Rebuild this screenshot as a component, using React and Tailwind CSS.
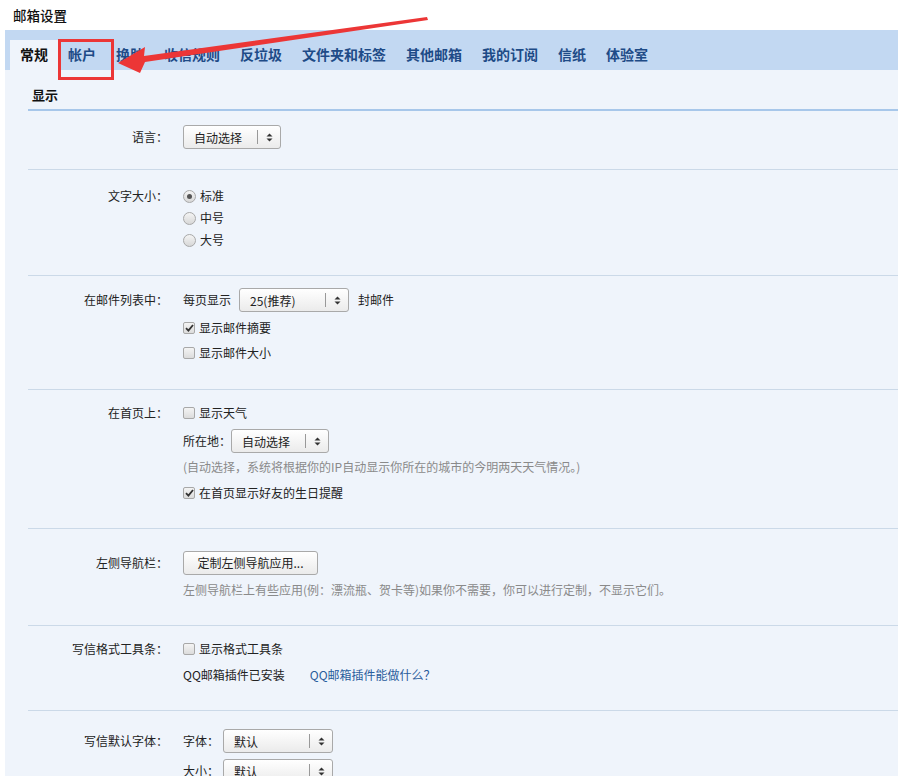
const FONT = "font-['Microsoft_YaHei','Noto_Sans_CJK_SC','Noto_Sans',sans-serif]";

const TABS = ["常规", "帐户", "换肤", "收信规则", "反垃圾", "文件夹和标签", "其他邮箱", "我的订阅", "信纸", "体验室"];

function Updown() {
  return (
    <svg width="7" height="9" viewBox="0 0 7 9">
      <path d="M3.5 0.5 L6.5 3.5 L0.5 3.5 Z" fill="#333" />
      <path d="M3.5 8.5 L6.5 5.5 L0.5 5.5 Z" fill="#333" />
    </svg>
  );
}

function Select({ value, w }) {
  return (
    <div
      className={`${w} h-[24px] flex items-center border border-[#a9a9a9] rounded-[3px] bg-gradient-to-b from-white to-[#ebebeb] text-[12px] text-[#222]`}
    >
      <span className="flex-1 pl-[10px] pt-[1px]">{value}</span>
      <span className="w-px h-[14px] bg-[#999]" />
      <span className="w-[22px] flex justify-center">
        <Updown />
      </span>
    </div>
  );
}

function Checkbox({ checked }) {
  return (
    <span className="w-[12px] h-[12px] border border-[#a8a8a8] rounded-[2px] bg-gradient-to-b from-[#f4f4f4] to-[#dcdcdc] flex items-center justify-center shrink-0">
      {checked && (
        <svg width="9" height="8" viewBox="0 0 9 8">
          <path d="M1 4.2 L3.4 6.6 L8 1" fill="none" stroke="#333" strokeWidth="1.8" />
        </svg>
      )}
    </span>
  );
}

function Radio({ checked }) {
  return (
    <span className="w-[13px] h-[13px] rounded-full border border-[#a8a8a8] bg-gradient-to-b from-[#f4f4f4] to-[#d8d8d8] flex items-center justify-center shrink-0">
      {checked && <span className="w-[5px] h-[5px] rounded-full bg-[#555]" />}
    </span>
  );
}

function Row({ label, lh, pt, pb, children }) {
  return (
    <div className={`flex border-b border-[#cbd9e8] ${pt} ${pb}`}>
      <div className={`w-[140px] ${lh} flex items-center justify-end text-[12px] text-[#222] shrink-0`}>
        {label}
      </div>
      <div className="pl-[15px] flex flex-col text-[12px] text-[#222]">{children}</div>
    </div>
  );
}

export default function App() {
  return (
    <div className={`relative w-[898px] h-[776px] bg-white overflow-hidden ${FONT}`}>
      <div className="h-[30px] pl-[13px] flex items-center text-[13.5px] font-medium text-[#111]">
        邮箱设置
      </div>

      <div className="ml-[5px] bg-[#eff4fb] h-[746px]">
        <div className="h-[40px] bg-[#c2d8f2] pt-[10px] pl-[5px] flex">
          {TABS.map((t, i) => (
            <div
              key={t}
              className={`h-[30px] px-[10px] pb-[1px] flex items-center text-[14px] font-bold ${
                i === 0 ? "bg-[#eff4fb] text-[#111] px-[9px]" : "text-[#1e4b87]"
              }`}
            >
              {t}
            </div>
          ))}
        </div>

        <div className="pl-[23px]">
          <div className="h-[41px] pt-[14px] pl-[4px] border-b-2 border-[#a7c7ea] text-[13px] font-bold text-[#111] leading-[22px]">
            显示
          </div>

          <Row label="语言：" lh="h-[24px]" pt="pt-[14px]" pb="pb-[20px]">
            <Select value="自动选择" w="w-[98px]" />
          </Row>

          <Row label="文字大小：" lh="h-[22px]" pt="pt-[15px]" pb="pb-[24px]">
            {[["标准", true], ["中号", false], ["大号", false]].map(([t, c]) => (
              <div key={t} className="h-[22px] flex items-center gap-[4px]">
                <Radio checked={c} />
                <span>{t}</span>
              </div>
            ))}
          </Row>

          <Row label="在邮件列表中：" lh="h-[24px]" pt="pt-[12px]" pb="pb-[25px]">
            <div className="h-[24px] flex items-center">
              <span>每页显示</span>
              <span className="ml-[8px]">
                <Select value="25(推荐)" w="w-[110px]" />
              </span>
              <span className="ml-[9px]">封邮件</span>
            </div>
            <div className="h-[22px] mt-[5px] flex items-center gap-[4px]">
              <Checkbox checked />
              <span>显示邮件摘要</span>
            </div>
            <div className="h-[22px] mt-[3px] flex items-center gap-[4px]">
              <Checkbox />
              <span>显示邮件大小</span>
            </div>
          </Row>

          <Row label="在首页上：" lh="h-[22px]" pt="pt-[12px]" pb="pb-[24px]">
            <div className="h-[22px] flex items-center gap-[4px]">
              <Checkbox />
              <span>显示天气</span>
            </div>
            <div className="h-[24px] mt-[5px] flex items-center">
              <span>所在地：</span>
              <Select value="自动选择" w="w-[98px]" />
            </div>
            <div className="h-[22px] mt-[3px] flex items-center text-[#8a8a8a]">
              (自动选择，系统将根据你的IP自动显示你所在的城市的今明两天天气情况。)
            </div>
            <div className="h-[22px] mt-[4px] flex items-center gap-[4px]">
              <Checkbox checked />
              <span>在首页显示好友的生日提醒</span>
            </div>
          </Row>

          <Row label="左侧导航栏：" lh="h-[24px]" pt="pt-[22px]" pb="pb-[24px]">
            <button className="w-[135px] h-[24px] border border-[#a9a9a9] rounded-[3px] bg-gradient-to-b from-white to-[#ebebeb] text-[12px] text-[#222]">
              定制左侧导航应用...
            </button>
            <div className="h-[22px] mt-[4px] flex items-center text-[#8a8a8a]">
              左侧导航栏上有些应用(例：漂流瓶、贺卡等)如果你不需要，你可以进行定制，不显示它们。
            </div>
          </Row>

          <Row label="写信格式工具条：" lh="h-[22px]" pt="pt-[12px]" pb="pb-[24px]">
            <div className="h-[22px] flex items-center gap-[4px]">
              <Checkbox />
              <span>显示格式工具条</span>
            </div>
            <div className="h-[22px] mt-[4px] flex items-center">
              <span>QQ邮箱插件已安装</span>
              <a className="ml-[25px] text-[#2a5d9c]">QQ邮箱插件能做什么？</a>
            </div>
          </Row>

          <div className="flex pt-[18px]">
            <div className="w-[140px] h-[24px] flex items-center justify-end text-[12px] text-[#222] shrink-0">
              写信默认字体：
            </div>
            <div className="pl-[15px] flex flex-col text-[12px] text-[#222]">
              <div className="h-[24px] flex items-center">
                <span className="w-[40px]">字体：</span>
                <Select value="默认" w="w-[110px]" />
              </div>
              <div className="h-[24px] mt-[6px] flex items-center">
                <span className="w-[40px]">大小：</span>
                <Select value="默认" w="w-[110px]" />
              </div>
            </div>
          </div>
        </div>
      </div>

      {/* annotation overlay */}
      <div className="absolute left-[58px] top-[39px] w-[56px] h-[41px] border-[3px] border-[#ec3636]" />
      <svg className="absolute left-0 top-0" width="898" height="120" viewBox="0 0 898 120">
        <polygon points="118,63 145,47 144,56 427,17 428,20 145,62 140,73" fill="#ec3636" />
      </svg>
    </div>
  );
}
